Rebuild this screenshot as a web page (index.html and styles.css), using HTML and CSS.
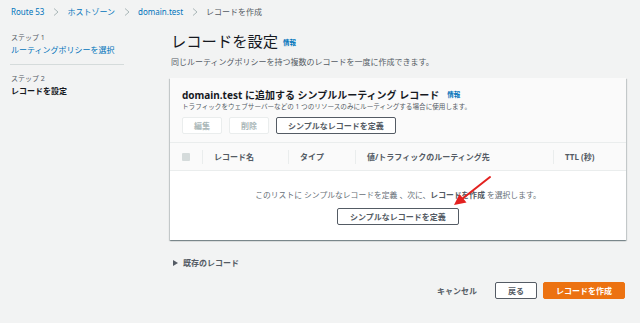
FILE: index.html
```html
<!DOCTYPE html>
<html lang="ja">
<head>
  <meta charset="UTF-8" />
  <meta name="viewport" content="width=device-width, initial-scale=1.0" />
  <title>レコードを作成 - Route 53</title>
  <link rel="stylesheet" href="styles.css">
</head>
<body>
  <nav class="breadcrumb">
    <a href="#">Route 53</a>
    <svg class="chevron" viewBox="0 0 6 8"><polyline points="1,0.5 5,4 1,7.5" /></svg>
    <a href="#">ホストゾーン</a>
    <svg class="chevron" viewBox="0 0 6 8"><polyline points="1,0.5 5,4 1,7.5" /></svg>
    <a href="#">domain.test</a>
    <svg class="chevron" viewBox="0 0 6 8"><polyline points="1,0.5 5,4 1,7.5" /></svg>
    <span class="current">レコードを作成</span>
  </nav>

  <div class="layout">
    <aside class="steps">
      <div class="step">
        <span class="step-label">ステップ 1</span>
        <a href="#" class="step-link">ルーティングポリシーを選択</a>
      </div>
      <div class="step active">
        <span class="step-label">ステップ 2</span>
        <span class="step-title">レコードを設定</span>
      </div>
    </aside>

    <main class="content">
      <h1 class="page-title">レコードを設定 <a href="#" class="info">情報</a></h1>
      <p class="page-desc">同じルーティングポリシーを持つ複数のレコードを一度に作成できます。</p>

      <section class="card">
        <div class="card-header">
          <h2>domain.test に追加する シンプルルーティング レコード <a href="#" class="info">情報</a></h2>
          <p>トラフィックをウェブサーバーなどの 1 つのリソースのみにルーティングする場合に使用します。</p>
          <div class="actions">
            <button class="btn" disabled>編集</button>
            <button class="btn" disabled>削除</button>
            <button class="btn">シンプルなレコードを定義</button>
          </div>
        </div>

        <div class="table-head">
          <div class="cell"><span class="checkbox"></span></div>
          <div class="cell"><span class="col">レコード名</span></div>
          <div class="cell"><span class="col">タイプ</span></div>
          <div class="cell"><span class="col">値/トラフィックのルーティング先</span></div>
          <div class="cell"><span class="col">TTL (秒)</span></div>
        </div>

        <div class="empty">
          <p>このリストに シンプルなレコードを定義 、次に、<strong>レコードを作成</strong> を選択します。</p>
          <button class="btn">シンプルなレコードを定義</button>
        </div>
      </section>

      <div class="existing">
        <span class="caret"></span>既存のレコード
      </div>

      <div class="footer">
        <button class="btn-link">キャンセル</button>
        <button class="btn">戻る</button>
        <button class="btn primary">レコードを作成</button>
      </div>
    </main>
  </div>

  <!-- annotation arrow drawn over the screenshot -->
  <svg class="arrow" viewBox="0 0 44 36">
    <line x1="40" y1="3" x2="12" y2="25" />
    <polygon points="4,31 9.5,20 16.5,28.5" />
  </svg>
</body>
</html>
```

FILE: styles.css
```css
:root {
  --bg: #f2f3f3;
  --text: #16191f;
  --text-muted: #545b64;
  --link: #0073bb;
  --border: #eaeded;
  --divider: #d5dbdb;
  --orange: #ec7211;
}

* {
  box-sizing: border-box;
  margin: 0;
  padding: 0;
}

body {
  position: relative;
  font-family: "Noto Sans", "Noto Sans CJK JP", sans-serif;
  background: var(--bg);
  color: var(--text);
  width: 640px;
  height: 323px;
  overflow: hidden;
}

a {
  color: var(--link);
  text-decoration: none;
}

.breadcrumb {
  display: flex;
  align-items: center;
  height: 24px;
  padding: 0 10px 0 11px;
  font-size: 8px;
  line-height: 10px;
}

.breadcrumb .current {
  color: var(--text-muted);
}

.chevron {
  width: 6px;
  height: 8px;
  margin: 0 8px 0 9px;
  fill: none;
  stroke: #aab7b8;
  stroke-width: 1;
}

.layout {
  display: flex;
}

.steps {
  width: 114px;
  margin: 0 46px 0 10px;
  padding-top: 9px;
}

.step {
  display: flex;
  flex-direction: column;
  gap: 1px;
  padding: 0 1px 8px;
}

.step.active {
  border-top: 1px solid var(--divider);
  padding-top: 9px;
}

.step-label {
  font-size: 7px;
  line-height: 10px;
  color: var(--text-muted);
}

.step-link,
.step-title {
  font-size: 8px;
  line-height: 12px;
}

.step-title {
  font-weight: 700;
}

.content {
  flex: 1;
  margin-right: 14px;
  padding-top: 7px;
}

.page-title {
  display: flex;
  align-items: center;
  height: 20px;
  font-size: 15.3px;
  font-weight: 400;
  line-height: 20px;
  padding-left: 1px;
}

.info {
  display: inline-block;
  font-size: 6.5px;
  font-weight: 700;
  line-height: 8px;
  margin-left: 5px;
}

.page-title .info {
  margin-top: 3px;
}

.page-desc {
  margin-top: 5px;
  font-size: 8px;
  line-height: 12px;
  height: 12px;
  color: var(--text-muted);
  padding-left: 1px;
}

.card {
  margin-top: 10px;
  background: #fff;
  box-shadow: 0 1px 1px 0 rgba(0, 28, 36, 0.3), 1px 1px 1px 0 rgba(0, 28, 36, 0.15), -1px 1px 1px 0 rgba(0, 28, 36, 0.15);
}

.card-header {
  background: #fafafa;
  padding: 10px 12px 8px;
  border-bottom: 1px solid var(--border);
}

.card-header h2 {
  display: flex;
  align-items: center;
  height: 14px;
  font-size: 10px;
  font-weight: 700;
  line-height: 14px;
}

.card-header h2 .info {
  margin-left: 8px;
}

.card-header p {
  font-size: 6.6px;
  line-height: 9px;
  height: 9px;
  color: var(--text-muted);
}

.actions {
  display: flex;
  gap: 7px;
  margin-top: 6px;
}

.btn {
  height: 17px;
  font-family: inherit;
  font-size: 8px;
  font-weight: 700;
  line-height: 15px;
  padding: 0 11px;
  color: var(--text-muted);
  background: #fff;
  border: 1px solid var(--text-muted);
  border-radius: 2px;
  cursor: pointer;
}

.btn:disabled {
  color: #aab7b8;
  border-color: #eaeded;
  cursor: default;
}

.table-head {
  display: grid;
  grid-template-columns: 32px 86px 67px 198px 1fr;
  align-items: center;
  height: 28px;
  background: #fafafa;
  border-bottom: 1px solid var(--border);
}

.cell {
  display: flex;
  align-items: center;
  height: 14px;
  padding-left: 11px;
  border-left: 1px solid var(--border);
}

.cell:first-child {
  border-left: none;
  padding-left: 12px;
}

.checkbox {
  width: 8px;
  height: 8px;
  background: #d5dbdb;
  border-radius: 1px;
}

.col {
  font-size: 8px;
  font-weight: 700;
  line-height: 12px;
  color: var(--text-muted);
}

.empty {
  display: flex;
  flex-direction: column;
  align-items: center;
  height: 69px;
  padding-top: 18px;
}

.empty p {
  font-size: 7.8px;
  line-height: 12px;
  height: 12px;
  color: #687078;
  margin-bottom: 7px;
}

.empty strong {
  color: var(--text-muted);
}

.empty .btn {
  padding: 0 12px;
}

.existing {
  display: flex;
  align-items: center;
  height: 12px;
  margin-top: 17px;
  padding-left: 3px;
  font-size: 8px;
  font-weight: 700;
  line-height: 12px;
  color: var(--text-muted);
}

.caret {
  width: 0;
  height: 0;
  border-top: 3px solid transparent;
  border-bottom: 3px solid transparent;
  border-left: 5px solid var(--text-muted);
  margin-right: 5px;
}

.footer {
  display: flex;
  justify-content: flex-end;
  gap: 6px;
  margin-top: 13px;
  padding-right: 1px;
}

.btn-link {
  height: 17px;
  font-family: inherit;
  font-size: 8px;
  font-weight: 700;
  line-height: 17px;
  padding: 0 12px;
  color: var(--text-muted);
  background: none;
  border: none;
  cursor: pointer;
}

.btn.primary {
  color: #fff;
  background: var(--orange);
  border-color: var(--orange);
}

.footer .btn {
  padding: 0 12px;
}

.arrow {
  position: absolute;
  left: 450px;
  top: 174px;
  width: 44px;
  height: 36px;
}

.arrow line {
  stroke: #e3211f;
  stroke-width: 2;
  stroke-linecap: round;
}

.arrow polygon {
  fill: #e3211f;
}
```
